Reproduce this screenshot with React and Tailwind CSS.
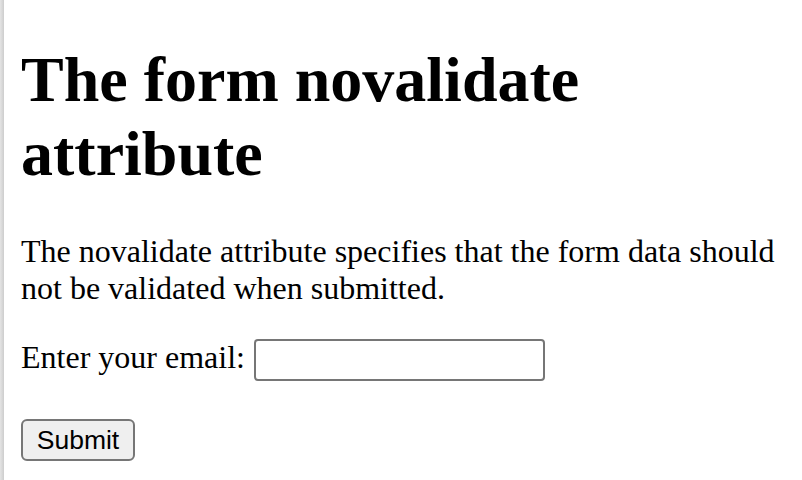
import React from 'react';

const App = () => {
  return (
    <div className="flex min-h-screen bg-white text-black">
      {/* frame edge */}
      <div className="w-[4px] shrink-0 bg-gradient-to-r from-[#e4e4e4] to-[#cdcdcd]"></div>

      <div className="flex flex-1 flex-col pl-[17px] pr-[16px] pt-[43px] font-['Liberation_Serif',serif] text-[32px] leading-[1.15]">
        <h1 className="text-[64px] font-bold leading-[1.15]">The form novalidate attribute</h1>

        <p className="mt-[43px]">
          The novalidate attribute specifies that the form data should not be validated when submitted.
        </p>

        <form className="mt-[32px] flex flex-col items-start" noValidate onSubmit={(e) => e.preventDefault()}>
          <div className="flex items-start gap-[9px]">
            <label htmlFor="email">Enter your email:</label>
            <input
              type="email"
              id="email"
              name="email"
              className="h-[42px] w-[291px] rounded-[4px] border-2 border-[#767676] bg-white px-[4px] font-['Liberation_Sans',sans-serif] text-[26px] outline-none"
            />
          </div>
          <button
            type="submit"
            className="mt-[38px] flex h-[42px] w-[114px] items-center justify-center rounded-[6px] border-2 border-[#767676] bg-[#efefef] font-['Liberation_Sans',sans-serif] text-[26.5px] leading-none text-black"
          >
            Submit
          </button>
        </form>
      </div>
    </div>
  );
};

export default App;
